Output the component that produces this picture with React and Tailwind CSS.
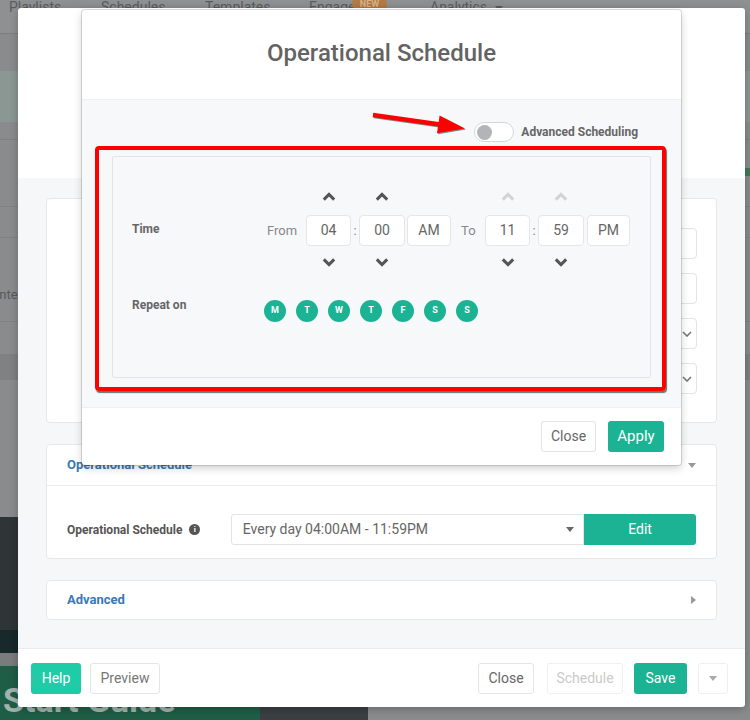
import React from "react";

function Chevron({ dir = "up", color = "#555" }) {
  return (
    <svg width="14" height="9" viewBox="0 0 14 9">
      {dir === "up" ? (
        <path d="M1.8 7.6 L7 2.4 L12.2 7.6" fill="none" stroke={color} strokeWidth="3" />
      ) : (
        <path d="M1.8 1.4 L7 6.6 L12.2 1.4" fill="none" stroke={color} strokeWidth="3" />
      )}
    </svg>
  );
}

function Spin({ value, w, upColor = "#555" }) {
  return (
    <div className={`flex flex-col items-center ${w}`}>
      <div className="h-[20px] flex items-center justify-center">
        <Chevron dir="up" color={upColor} />
      </div>
      <div className="mt-[9px] w-full h-[31px] rounded-[4px] border border-[#e4e6e9] bg-white flex items-center justify-center text-[14px] text-[#666]">
        {value}
      </div>
      <div className="mt-[6px] h-[20px] flex items-center justify-center">
        <Chevron dir="down" />
      </div>
    </div>
  );
}

function SmallCaret({ dir = "down", color = "#888" }) {
  return dir === "down" ? (
    <svg width="8" height="5" viewBox="0 0 8 5">
      <polygon points="0,0 8,0 4,5" fill={color} />
    </svg>
  ) : (
    <svg width="5" height="8" viewBox="0 0 5 8">
      <polygon points="0,0 5,4 0,8" fill={color} />
    </svg>
  );
}

function ThinChevron() {
  return (
    <svg width="10" height="6" viewBox="0 0 10 6">
      <path d="M1 1 L5 5 L9 1" fill="none" stroke="#777" strokeWidth="1.6" />
    </svg>
  );
}

const days = ["M", "T", "W", "T", "F", "S", "S"];

export default function App() {
  return (
    <div className="relative w-[750px] h-[720px] overflow-hidden font-['Roboto',sans-serif]">
      {/* Background page (dimmed) */}
      <div className="flex flex-col h-full bg-[#8a8b8d]">
        <nav className="h-[34px] shrink-0 bg-[#8f9092] border-b border-[#7d7e80] flex items-start text-[14px] text-[#5b5c5e] leading-[20px]">
          <span className="ml-[9px] -mt-[3px] w-[92px]">Playlists</span>
          <span className="-mt-[3px] w-[104px]">Schedules</span>
          <span className="-mt-[3px] w-[104px]">Templates</span>
          <span className="-mt-[3px] w-[43px]">Engage</span>
          <span className="-mt-[5px] w-[35px] h-[18px] rounded-full bg-[#b27b44] text-[9px] font-bold text-[#d8b38a] flex items-center justify-center">
            NEW
          </span>
          <span className="-mt-[3px] ml-[43px]">Analytics</span>
          <span className="ml-[8px] mt-[6px]">
            <SmallCaret color="#5b5c5e" />
          </span>
        </nav>
        <div className="h-[37px] shrink-0" />
        <div className="h-[51px] shrink-0 bg-[#8b9793]" />
        <div className="h-[18px] shrink-0 border-b border-[#808183]" />
        <div className="h-[67px] shrink-0 border-b border-[#808183] flex justify-end">
          <div className="w-[5px] h-[8px] mt-[28px] bg-[#3f7a5f]" />
        </div>
        <div className="h-[31px] shrink-0 border-b border-[#808183]" />
        <div className="h-[84px] shrink-0 border-b border-[#808183] flex items-center">
          <span className="-ml-[16px] mt-[30px] text-[13px] text-[#58595b]">Center</span>
        </div>
        <div className="h-[32px] shrink-0" />
        <div className="h-[26px] shrink-0 bg-[#808183]" />
        <div className="h-[137px] shrink-0" />
        <div className="flex flex-1">
          <div className="w-[368px] flex flex-col">
            <div className="h-[113px] bg-[#2f3437]" />
            <div className="h-[23px] bg-[#17292b]" />
            <div className="h-[13px] bg-[#7a7b7c]" />
            <div className="flex flex-1">
              <div className="w-[260px] bg-[#1f5e46] overflow-hidden">
                <div className="pl-[3px] pt-[17px] text-[34px] leading-[34px] font-bold text-[#a2b3ab] whitespace-nowrap">
                  Start Guide
                </div>
              </div>
              <div className="flex-1 bg-[#3b3f42]" />
            </div>
          </div>
          <div className="flex-1" />
        </div>
      </div>

      {/* Outer modal */}
      <div className="absolute left-[18px] top-[8px] w-[727px] h-[699px] bg-white rounded-[3px] flex flex-col overflow-hidden shadow-[0_2px_8px_rgba(0,0,0,0.25)]">
        <div className="h-[170px] shrink-0" />
        <div className="flex-1 bg-[#f6f7f9] px-[28px] pt-[20px] flex flex-col">
          {/* card 1 */}
          <div className="h-[225px] bg-white border border-[#e7e8ea] rounded-[4px] pt-[29px] px-[19px] flex flex-col gap-[14px]">
            <div className="flex">
              <div className="ml-[300px] flex-1 h-[31px] border border-[#e3e4e6] rounded-[4px]" />
            </div>
            <div className="flex">
              <div className="ml-[300px] flex-1 h-[31px] border border-[#e3e4e6] rounded-[4px]" />
            </div>
            <div className="flex">
              <div className="ml-[300px] flex-1 h-[31px] border border-[#e3e4e6] rounded-[4px] flex items-center justify-end pr-[4px]">
                <ThinChevron />
              </div>
            </div>
            <div className="flex">
              <div className="ml-[300px] flex-1 h-[31px] border border-[#e3e4e6] rounded-[4px] flex items-center justify-end pr-[4px]">
                <ThinChevron />
              </div>
            </div>
          </div>
          {/* card 2 */}
          <div className="mt-[21px] h-[115px] bg-white border border-[#e7e8ea] rounded-[4px] flex flex-col">
            <div className="h-[41px] border-b border-[#eaebed] flex items-center justify-between px-[20px]">
              <span className="text-[13px] font-bold text-[#3a78b5]">Operational Schedule</span>
              <SmallCaret color="#999" />
            </div>
            <div className="pt-[28px] px-[20px] flex items-center">
              <div className="w-[164px] flex items-center">
                <span className="text-[12px] font-bold text-[#555]">Operational Schedule</span>
                <span className="ml-[7px] w-[11px] h-[11px] rounded-full bg-[#555] text-white text-[8px] font-bold flex items-center justify-center leading-none">
                  i
                </span>
              </div>
              <div className="w-[354px] h-[31px] border border-[#e2e3e5] rounded-l-[3px] bg-white flex items-center justify-between pl-[11px] pr-[9px]">
                <span className="text-[14px] text-[#666]">Every day 04:00AM - 11:59PM</span>
                <SmallCaret color="#666" />
              </div>
              <div className="w-[112px] h-[31px] bg-[#1cb394] rounded-r-[3px] flex items-center justify-center text-[14px] text-white">
                Edit
              </div>
            </div>
          </div>
          {/* card 3 */}
          <div className="mt-[21px] h-[40px] bg-white border border-[#e7e8ea] rounded-[4px] flex items-center justify-between px-[20px]">
            <span className="text-[13px] font-bold text-[#3a78b5]">Advanced</span>
            <SmallCaret dir="right" color="#999" />
          </div>
        </div>
        <div className="h-[59px] shrink-0 border-t border-[#ebecee] flex items-center px-[13px]">
          <div className="w-[50px] h-[31px] rounded-[3px] bg-[#20cba7] text-white text-[14px] flex items-center justify-center">
            Help
          </div>
          <div className="ml-[9px] w-[70px] h-[31px] rounded-[3px] border border-[#e4e5e7] text-[#777] text-[14px] flex items-center justify-center">
            Preview
          </div>
          <div className="flex-1" />
          <div className="w-[56px] h-[31px] rounded-[3px] border border-[#e4e5e7] text-[#666] text-[14px] flex items-center justify-center">
            Close
          </div>
          <div className="ml-[13px] w-[76px] h-[31px] rounded-[3px] border border-[#eeeff1] text-[#cacaca] text-[14px] flex items-center justify-center">
            Schedule
          </div>
          <div className="ml-[11px] w-[53px] h-[31px] rounded-[3px] bg-[#1cb394] text-white text-[14px] flex items-center justify-center">
            Save
          </div>
          <div className="ml-[11px] w-[30px] h-[31px] rounded-[3px] border border-[#eeeff1] flex items-center justify-center">
            <SmallCaret color="#aaa" />
          </div>
          <div className="w-[4px]" />
        </div>
      </div>

      {/* Inner modal */}
      <div className="absolute left-[82px] top-[10px] w-[599px] h-[455px] bg-white rounded-[3px] flex flex-col overflow-hidden shadow-[0_0_0_1px_rgba(0,0,0,0.12),0_3px_8px_rgba(0,0,0,0.2)]">
        <div className="h-[90px] shrink-0 border-b border-[#eef0f2] flex items-center justify-center pb-[4px]">
          <h2 className="text-[24px] font-medium text-[#636363]">Operational Schedule</h2>
        </div>
        <div className="flex-1 bg-[#f7f8fa] flex flex-col">
          <div className="pt-[22px] pr-[43px] flex justify-end items-center">
            <div className="w-[40px] h-[20px] rounded-full border border-[#d6d7d9] bg-white flex items-center pl-[2px]">
              <div className="w-[15px] h-[15px] rounded-full bg-[#b3b4b8]" />
            </div>
            <span className="ml-[7px] text-[12px] font-bold text-[#666]">Advanced Scheduling</span>
          </div>
          <div className="mt-[14px] mx-[30px] h-[222px] border border-[#e2e4e7] rounded-[2px] pt-[29px] pl-[19px] flex flex-col">
            <div className="flex items-start">
              <div className="w-[132px] mt-[35px] text-[12px] leading-[16px] font-bold text-[#666]">Time</div>
              <div className="flex items-start">
                <span className="mt-[29px] h-[31px] w-[42px] pl-[3px] flex items-center text-[13px] text-[#888]">From</span>
                <Spin value="04" w="w-[45px]" />
                <span className="mt-[29px] h-[31px] w-[8px] flex items-center justify-center text-[13px] text-[#888]">:</span>
                <Spin value="00" w="w-[46px]" />
                <span className="mt-[29px] ml-[2px] w-[44px] h-[31px] rounded-[4px] border border-[#e4e6e9] bg-white flex items-center justify-center text-[14px] text-[#666]">
                  AM
                </span>
                <span className="mt-[29px] h-[31px] w-[34px] pl-[10px] flex items-center text-[13px] text-[#888]">To</span>
                <Spin value="11" w="w-[45px]" upColor="#d2d3d5" />
                <span className="mt-[29px] h-[31px] w-[8px] flex items-center justify-center text-[13px] text-[#888]">:</span>
                <Spin value="59" w="w-[46px]" upColor="#d2d3d5" />
                <span className="mt-[29px] ml-[3px] w-[43px] h-[31px] rounded-[4px] border border-[#e4e6e9] bg-white flex items-center justify-center text-[14px] text-[#666]">
                  PM
                </span>
              </div>
            </div>
            <div className="mt-[25px] flex items-start">
              <div className="w-[132px] text-[12px] leading-[16px] font-bold text-[#666]">Repeat on</div>
              <div className="mt-[3px] flex gap-[10px]">
                {days.map((d, i) => (
                  <div
                    key={i}
                    className="w-[22px] h-[22px] rounded-full bg-[#1cb394] text-white text-[9px] font-bold flex items-center justify-center"
                  >
                    {d}
                  </div>
                ))}
              </div>
            </div>
          </div>
        </div>
        <div className="h-[58px] shrink-0 border-t border-[#eef0f2] flex items-center justify-end pr-[17px] gap-[12px]">
          <div className="w-[55px] h-[31px] rounded-[3px] border border-[#e2e3e5] bg-white text-[14px] text-[#666] flex items-center justify-center">
            Close
          </div>
          <div className="w-[56px] h-[31px] rounded-[3px] bg-[#1cb394] text-[15px] text-white flex items-center justify-center">
            Apply
          </div>
        </div>
      </div>

      {/* Red annotation rectangle */}
      <div className="absolute left-[95px] top-[146px] w-[571px] h-[245px] border-[4px] border-[#ff0000] rounded-[4px] shadow-[1px_2px_1px_rgba(20,70,60,0.7)]" />

      {/* Red arrow */}
      <svg
        className="absolute left-[368px] top-[106px] drop-shadow-[1px_1px_0_rgba(20,80,70,0.6)]"
        width="104"
        height="34"
        viewBox="0 0 104 34"
      >
        <line x1="5" y1="9" x2="74" y2="18.7" stroke="#ff0000" strokeWidth="4.5" />
        <polygon points="97,22.6 71.6,9.5 69,27.3" fill="#ff0000" />
      </svg>
    </div>
  );
}
